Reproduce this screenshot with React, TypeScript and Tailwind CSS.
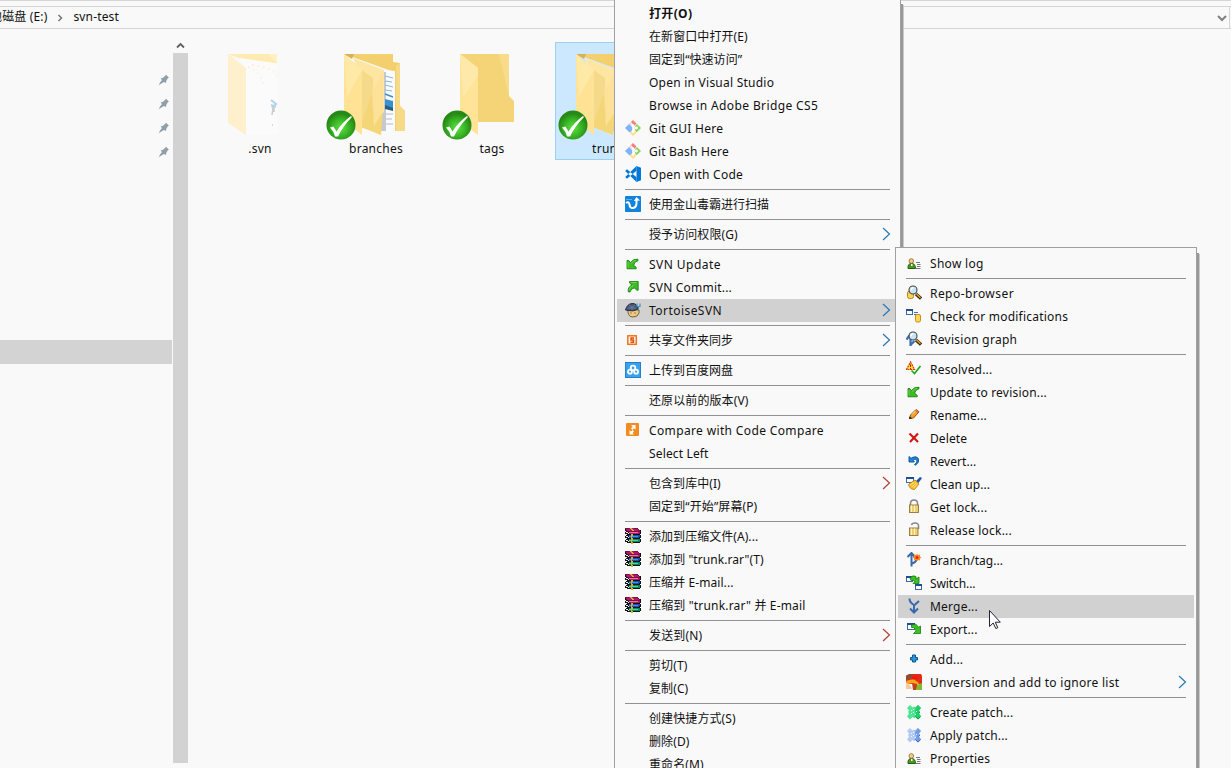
import React from "react";

type Item = { t?: string; icon?: string; arrow?: "b" | "r"; on?: boolean; bold?: boolean; track?: string };

const main: Item[] = [
  { t: "打开(O)", bold: true, track: "tracking-[0.35px]" },
  { t: "在新窗口中打开(E)", track: "tracking-[0.08px]" },
  { t: "固定到“快速访问”", track: "tracking-[0.05px]" },
  { t: "Open in Visual Studio", track: "tracking-[0.24px]" },
  { t: "Browse in Adobe Bridge CS5", track: "tracking-[0.38px]" },
  { t: "Git GUI Here", icon: "git", track: "tracking-[0.26px]" },
  { t: "Git Bash Here", icon: "git" },
  { t: "Open with Code", icon: "code", track: "tracking-[0.26px]" },
  {},
  { t: "使用金山毒霸进行扫描", icon: "duba", track: "tracking-normal" },
  {},
  { t: "授予访问权限(G)", arrow: "b", track: "tracking-[0.08px]" },
  {},
  { t: "SVN Update", icon: "update", track: "tracking-[0.45px]" },
  { t: "SVN Commit...", icon: "commit" },
  { t: "TortoiseSVN", icon: "tortoise", arrow: "b", on: true, track: "tracking-[0.45px]" },
  {},
  { t: "共享文件夹同步", icon: "share", arrow: "b", track: "tracking-normal" },
  {},
  { t: "上传到百度网盘", icon: "baidu", track: "tracking-normal" },
  {},
  { t: "还原以前的版本(V)", track: "tracking-[0.1px]" },
  {},
  { t: "Compare with Code Compare", icon: "compare", track: "tracking-[0.36px]" },
  { t: "Select Left", track: "tracking-[0.15px]" },
  {},
  { t: "包含到库中(I)", arrow: "r", track: "tracking-[0.05px]" },
  { t: "固定到“开始”屏幕(P)", track: "tracking-[0.1px]" },
  {},
  { t: "添加到压缩文件(A)...", icon: "rar", track: "tracking-[0.05px]" },
  { t: "添加到 \"trunk.rar\"(T)", icon: "rar", track: "tracking-[0.07px]" },
  { t: "压缩并 E-mail...", icon: "rar", track: "tracking-[0.08px]" },
  { t: "压缩到 \"trunk.rar\" 并 E-mail", icon: "rar", track: "tracking-[0.17px]" },
  {},
  { t: "发送到(N)", arrow: "r", track: "tracking-[0.15px]" },
  {},
  { t: "剪切(T)", track: "tracking-[0.1px]" },
  { t: "复制(C)", track: "tracking-[0.1px]" },
  {},
  { t: "创建快捷方式(S)", track: "tracking-[0.1px]" },
  { t: "删除(D)", track: "tracking-[0.1px]" },
  { t: "重命名(M)", track: "tracking-[0.1px]" },
];

const sub: Item[] = [
  { t: "Show log", icon: "log", track: "tracking-[0.3px]" },
  {},
  { t: "Repo-browser", icon: "repo", track: "tracking-[0.44px]" },
  { t: "Check for modifications", icon: "check", track: "tracking-[0.22px]" },
  { t: "Revision graph", icon: "graph", track: "tracking-[0.27px]" },
  {},
  { t: "Resolved...", icon: "resolved" },
  { t: "Update to revision...", icon: "update" },
  { t: "Rename...", icon: "rename", track: "tracking-[0.08px]" },
  { t: "Delete", icon: "delete", track: "tracking-[0.1px]" },
  { t: "Revert...", icon: "revert", track: "tracking-[0.05px]" },
  { t: "Clean up...", icon: "cleanup", track: "tracking-[0.08px]" },
  { t: "Get lock...", icon: "lock" },
  { t: "Release lock...", icon: "unlock", track: "tracking-[0.22px]" },
  {},
  { t: "Branch/tag...", icon: "branch", track: "tracking-[0.05px]" },
  { t: "Switch...", icon: "switch", track: "tracking-[-0.1px]" },
  { t: "Merge...", icon: "merge", on: true },
  { t: "Export...", icon: "export", track: "tracking-[0.1px]" },
  {},
  { t: "Add...", icon: "add" },
  { t: "Unversion and add to ignore list", icon: "ignore", arrow: "b", track: "tracking-[0.27px]" },
  {},
  { t: "Create patch...", icon: "patchG", track: "tracking-[0.13px]" },
  { t: "Apply patch...", icon: "patchB", track: "tracking-[0.13px]" },
  { t: "Properties", icon: "log" },
];

const inks: Record<string, string> = {
  K: "#141014", D: "#7a0f45", M: "#b01868", P: "#e873ae", W: "#f2f2f2",
  B: "#1454ac", L: "#3f95e6", T: "#0b8a5e", G: "#3fd79c", Y: "#d8ac2c",
};

const books = [
  "DDDDMYYMMDDDD...",
  "KMMMMMYYMMMMMD..",
  "KDMMMMMYYMMMMMDK",
  "WKKDDDDDDDDDDDDK",
  "KWWKPPPPPPPPPMMK",
  "KKKWDMMMMMMMMMDK",
  "WWKKKKYYKKKKKKK.",
  "WKKKBBYYBBBBBBBK",
  "KWWKLLYLLLLLLBBK",
  "KKKWBBYBBBBBBBKK",
  "WWKKKKYYKKKKKKK.",
  "WKKKTTYYTTTTTTTK",
  "KWWKGGYGGGGGGTTK",
  "KKKWTTYTTTTTTTTK",
  "..KKKKYYKKKKKKK.",
  "......YY........",
];

const Win = ({ x, y, w = 7, h = 6 }: { x: number; y: number; w?: number; h?: number }) => (
  <g>
    <rect x={x + 0.5} y={y + 0.5} width={w - 1} height={h - 1} fill="#fff" stroke="#3c66a5" />
    <rect x={x} y={y} width={w} height={2} fill="#1e4e96" />
  </g>
);

const Patch = ({ a, b, c }: { a: string; b: string; c: string }) => (
  <g>
    <path d="M4 1 6.500 3.500 8 2.500 9.500 3.500 12 1 15 4 13 6.500 14 8l-1 1.500 2 3-3 3-2.500-2.500L8 14l-1.500-1L4 15.500 1 12.500 3 9.500 2 8l1-1.500L1 4Z" fill={a} />
    <path d="m9.500 3.500 2.500-2.500 3 3-2 2.500 1 1.500-1 1.500 2 3-3 3-2.500-2.500L8 14l2-4-1-3Z" fill={b} />
    <path d="M5 6h1v1H5zM7 5h1v1H7zM7 8h1v1H7zM5 9h1v1H5zM9 10h1v1H9zM10 7h1v1h-1z" fill="#eafff3" />
    <path d="m14.500 12.500-2.500 2.500-2.500-2.500M12.500 9.500 14 8" fill="none" stroke={c} />
  </g>
);

const Lens = () => (
  <g>
    <path d="m10 9 5 4.500" stroke="#3c2500" strokeWidth="3.200" />
    <path d="m10.500 9 4 3.700" stroke="#e0a63c" strokeWidth="1.300" />
    <circle cx="7" cy="5" r="4" fill="#c4e5f7" stroke="#454545" strokeWidth="1.100" />
    <path d="M5 5.500q0-2.500 2.500-2.800" fill="none" stroke="#fff" strokeWidth="1.300" />
  </g>
);

const icons: Record<string, React.ReactNode> = {
  git: (
    <g>
      <path d="m8 0 3.500 3.500L9.500 6 8 6.500 4.500 3.500Z" fill="#f58080" />
      <path d="m0 8 4-4 3.500 3.500V11L4.500 12.500Z" fill="#80b3ff" />
      <path d="m16 8-4-4-2.500 3 1 4.500 1.500.5Z" fill="#8fd160" />
      <path d="m8 16-3.500-3.500L8 10l3.500 2.500Z" fill="#ffe085" />
      <path d="m5.500 2.500 2.500 3v6M8 5.500l3.500 3" stroke="#fff" fill="none" strokeWidth="1.200" />
      <circle cx="11.500" cy="8" r="1.400" fill="#fff" /><circle cx="8" cy="11.500" r="1.400" fill="#fff" /><circle cx="8" cy="5.500" r="1.300" fill="#fff" />
    </g>
  ),
  code: (
    <g fill="#0078d7">
      <path d="M11.500 0 16 1.800v12.400L11.500 16Z" />
      <path d="M11.500 0v4.800L2 12.800.2 11Zm0 16v-4.800L2 3.200.2 5Z" />
    </g>
  ),
  duba: (
    <g>
      <rect width="16" height="16" rx=".8" fill="#1283da" />
      <path d="M1 7Q4 5 4.500 8.500q.5 4 3.500 3.500 3.500-.5 3.500-5V4" fill="none" stroke="#fff" strokeWidth="2" />
      <path d="m8.800 5 2.700-4L15 4.500Z" fill="#fff" />
      <path d="M1 3.500h6" stroke="#55b4f5" />
    </g>
  ),
  update: (
    <g>
      <path d="M2 4.500h1.800l1.700 2Q8.500 2.500 13 3.200v1.600Q9.300 5.500 8.700 9.300l2.500 2v1.500H2Z" fill="#3dba24" stroke="#127a0c" strokeWidth=".8" />
      <path d="M3 6v5.500M6 7.500Q8.500 4.500 11 4" stroke="#7fe05e" strokeWidth=".8" fill="none" />
    </g>
  ),
  commit: (
    <g>
      <path d="M4.500 2.500h8.700v8.700h-1.500L9.700 9Q6 9 5 13H3.500Q2 8.500 7 6L4.500 4Z" fill="#3dba24" stroke="#127a0c" strokeWidth=".8" />
      <path d="M6 3.500h5.500M4 11q.5-3.500 4.500-4.500" stroke="#7fe05e" strokeWidth=".8" fill="none" />
    </g>
  ),
  tortoise: (
    <g>
      <path d="M3 8h11v3q-1 4-6 4-4.500 0-5-5Z" fill="#eecb85" stroke="#6b5228" strokeWidth=".9" />
      <path d="M.5 8Q2 2 7 1.500q5-.5 6 5.500Q8 10 3 8.500Z" fill="#44536f" stroke="#27324c" />
      <path d="m4 3 3 2 3-2M7 5v3M3 6h8" stroke="#7e8fb0" fill="none" strokeWidth=".7" />
      <path d="M12 1.500v3h3v-3M13.500 5v3" stroke="#3f94b5" strokeWidth="1.200" fill="none" />
      <path d="M5 11h2M9 11h2" stroke="#a97a35" />
    </g>
  ),
  share: (
    <g>
      <rect x="2.800" y="3.800" width="8.500" height="8.500" fill="#fff3e6" stroke="#ee7623" strokeWidth="1.500" />
      <path d="M9 6H6v2h2.500v2.200h-3" fill="none" stroke="#e04f08" strokeWidth="1.400" />
    </g>
  ),
  baidu: (
    <g>
      <rect width="16" height="16" fill="#3aa2ec" />
      <rect x=".5" y=".5" width="15" height="15" fill="none" stroke="#2580cb" />
      <g fill="none" stroke="#fff" strokeWidth="1.800"><circle cx="8" cy="6" r="2.300" /><circle cx="4.900" cy="9.700" r="2" /><circle cx="11.100" cy="9.700" r="2" /></g>
    </g>
  ),
  compare: (
    <g>
      <rect x="1" y="1" width="13" height="13" rx="1" fill="#f48b1e" />
      <path d="M6 3h4.500v4.500L9 6.500 7.500 8 6 6.500l1.500-2ZM4.500 8 6 9.500 7.500 8 9 9.500l-1.500 1.500L9 12.500H4.500Z" fill="#fff" />
    </g>
  ),
  rar: (
    <g shapeRendering="crispEdges">
      {books.flatMap((line, y) =>
        [...line].map((c, x) => (c === "." ? null : <rect key={`${x}-${y}`} x={x} y={y} width="1" height="1" fill={inks[c]} />))
      )}
    </g>
  ),
  log: (
    <g>
      <path d="M2 13.500Q1.500 8.500 5.500 8.500t4 5Z" fill="#459d16" stroke="#1e4d0c" strokeWidth=".9" />
      <circle cx="5.300" cy="6" r="2.300" fill="#f2cf8c" stroke="#94652a" strokeWidth=".8" />
      <path d="M5 9h1.500v2H5z" fill="#fff" />
      <path d="M10 7.500h4M11 9.500h3.500M11 11.500h3.500M10 13.500h4.500" stroke="#777" />
    </g>
  ),
  repo: <g><rect x="1.500" y="6" width="6" height="7.500" rx="2" fill="#fbd35a" stroke="#bd8413" /><Lens /></g>,
  check: (
    <g>
      <Win x={0} y={1} w={7} h={6} />
      <path d="M8 4.500h4M8 6.500h3" stroke="#3d6fb3" />
      <rect x="9.500" y="6.500" width="5" height="7.500" rx="1.500" fill="#ffd55a" stroke="#c8901a" />
    </g>
  ),
  graph: <g><path d="M4.500 15V5M.5 8.500l3-4M4.500 14l4-4" stroke="#3d6eb5" strokeWidth="2.200" fill="none" /><Lens /></g>,
  resolved: (
    <g>
      <path d="M4.500 1 8.500 8.500h-8Z" fill="#ffed16" stroke="#e22818" strokeWidth="1.200" strokeDasharray="2 .7" />
      <path d="M4.500 3.500v2.500M4.500 7v1" stroke="#a31208" />
      <path d="m5.500 9.500 3 3 6-7.500" fill="none" stroke="#1aa51b" strokeWidth="1.600" />
    </g>
  ),
  rename: (
    <g>
      <path d="m3.500 11.500 1-3.500L10 2.500l3 2.300-5.500 6.200Z" fill="#f7a321" stroke="#87440b" strokeWidth=".9" />
      <path d="m6 7.500 4-4" stroke="#ffe398" /><path d="m10.500 3 2.200 1.700-1.200 1.300-2-2Z" fill="#d8695a" /><path d="m3 12 .7-2.500L6 11.300Z" fill="#111" />
    </g>
  ),
  delete: <path d="m3.500 3.500 8.500 8.500M12 3.500 4 12" stroke="#d01512" strokeWidth="2.100" />,
  revert: <path d="M3 3.500V9h5.500L7 7.300q3.800-2.300 4 .7 0 2-2.500 3.500l1 .8Q13.500 9.500 12.500 6 10.500 2 5 5.300Z" fill="#2287d8" stroke="#074f9a" strokeWidth=".9" />,
  cleanup: (
    <g>
      <Win x={0} y={1} w={8} h={6} />
      <path d="m10 5 4-4 2 1-3.500 5Z" fill="#1c58a2" />
      <path d="m3.500 7.500 5.500-3.500 4 4-4.500 5.500q-4.500 0-6-4.500Z" fill="#f9bd2e" stroke="#b97a10" strokeWidth=".8" />
      <path d="m4 9 4.500-3M6 11l4-4M8 12l3-4" stroke="#ffe98a" strokeWidth=".8" />
    </g>
  ),
  lock: (
    <g>
      <path d="M4.500 6V4.500Q4.500 1 8 1t3.500 3.500V6" fill="none" stroke="#858585" strokeWidth="1.500" />
      <rect x="3.500" y="6" width="9" height="7.500" fill="#ebcf77" stroke="#97733a" strokeWidth=".9" />
      <path d="M5.500 6.500v6.500M8.500 6.500v6.500" stroke="#fff3be" />
    </g>
  ),
  unlock: (
    <g>
      <path d="M5.500 3Q6 .8 9.500 1 13 1.500 12.500 4.500V7" fill="none" stroke="#858585" strokeWidth="1.500" />
      <rect x="3.500" y="6" width="8.500" height="7.500" fill="#ebcf77" stroke="#97733a" strokeWidth=".9" />
      <path d="M5.500 6.500v6.500M8.500 6.500v6.500" stroke="#fff3be" />
    </g>
  ),
  branch: (
    <g>
      <path d="M5.500 14.500V2M1.500 5l4-4 3.500 4" stroke="#3968ad" strokeWidth="2" fill="none" />
      <path d="M6 11.500q4-1 5-4.500" stroke="#3968ad" strokeWidth="2" fill="none" />
      <path d="m11 1.500 1 1.500 2-.5v2l1.500 1-1.500 1v2l-2-.5-1 1-1-1-2 .5v-2L6.500 5.500 8 4.500v-2l2 .5Z" fill="#f78a2a" />
      <circle cx="11" cy="5.500" r="1.500" fill="#e52719" />
    </g>
  ),
  switch: (
    <g>
      <Win x={0} y={1} w={7} h={6} />
      <path d="M4 3Q7-.5 10 1.500V4l3-2v6.500H7L9 6.500Q7 4.500 5 5.500Z" fill="#3cc022" stroke="#147d0c" strokeWidth=".8" />
      <Win x={9} y={9} w={7} h={6} />
    </g>
  ),
  merge: (
    <g fill="none" stroke="#3968ad" strokeWidth="2">
      <path d="M3.500.5q0 4 4.500 6.500v7M13 3 8 7.500M4 10.500l4 4 4-4" />
    </g>
  ),
  export: (
    <g>
      <Win x={1} y={2} w={8} h={7} />
      <path d="M5.500 4q5.500-2.500 6.500 2.500l2.500-1.500V12.500H7.500L10 10Q9.500 6 5.500 6.500Z" fill="#3cc022" stroke="#147d0c" strokeWidth=".8" />
    </g>
  ),
  add: <path d="M6.500 4h3v2.500h2v2.500h-2v2h-3v-2h-2V6.500h2Z" fill="#2d97dc" stroke="#0d5593" />,
  ignore: (
    <g>
      <path d="M3 0h12l1 2v8H2L0 8V2Z" fill="#e32b17" />
      <path d="M1 1 7 0 6 3 2 6 0 6V2Z" fill="#84503a" />
      <path d="M6 3q4-2 6 0l-1 2H6Z" fill="#ee1a10" />
      <path d="M0 7q4-2 8-1.500L13 9l-3 4-3-4-5 1Z" fill="#fba51b" />
      <path d="M6 9l5 1 1 2-2 4H7Z" fill="#c3401b" /><path d="m10 16 1-5 5-2v7Z" fill="#82b92f" />
      <path d="M0 9q4 0 6 6H0Z" fill="#f6c9a0" />
    </g>
  ),
  patchG: <Patch a="#4ce692" b="#22cc68" c="#12984a" />,
  patchB: <Patch a="#b3cbf0" b="#749fe6" c="#3f6dc8" />,
};

const Icon = ({ name }: { name: string }) => (
  <svg className="block h-4 w-4 shrink-0" viewBox="0 0 16 16">{icons[name]}</svg>
);

const Arrow = ({ kind }: { kind: "b" | "r" }) => (
  <svg className="-mr-px mb-px h-3.5 w-[9px] shrink-0" viewBox="0 0 9 14" fill="none">
    <path d="m1 1 6.500 6L1 13" stroke={kind === "b" ? "#2878b4" : "#b0433c"} strokeWidth="1.200" />
  </svg>
);

const Row = ({ it }: { it: Item }) => {
  if (!it.t)
    return (
      <div className="flex h-[7px] shrink-0 items-center px-2">
        <div className="h-px w-full bg-[#919191]" />
      </div>
    );
  return (
    <div className={`flex h-[23px] shrink-0 items-center px-2 ${it.on ? "bg-[#d1d1d1]" : ""}`}>
      <div className="mr-2 mb-px h-4 w-4 shrink-0">{it.icon && <Icon name={it.icon} />}</div>
      <span className={`grow text-[12px] leading-[23px] whitespace-pre ${it.bold ? "font-bold" : ""} ${it.track ?? "tracking-[0.2px]"}`}>
        {it.t}
      </span>
      {it.arrow && <Arrow kind={it.arrow} />}
    </div>
  );
};

const Check = () => (
  <svg className="absolute top-[67px] left-0.5 h-[30px] w-[30px]" viewBox="0 0 30 30">
    <defs>
      <radialGradient id="orb" cx=".5" cy=".6" r=".5"><stop offset="0" stopColor="#5fe045" /><stop offset=".6" stopColor="#37b424" /><stop offset="1" stopColor="#268815" /></radialGradient>
    </defs>
    <circle cx="15" cy="15" r="14.500" fill="url(#orb)" />
    <path d="m4 17.500 3.500-1 3 5Q17 11.500 25 6l1 1Q17 16 12 26.500H9Q8 21.500 4 17.500Z" fill="#fff" />
  </svg>
);

const Folder = ({ kind }: { kind: "svn" | "open" | "tags" | "cut" }) => (
  <svg className="h-[82px] w-[62px]" viewBox="0 0 62 82">
    {kind === "svn" && (
      <g>
        <path d="M0 0h49v9.500L12 4.500Z" fill="#ffeab2" />
        <path d="M40 0h9v9Z" fill="#fff0c6" />
        <path d="m12 4 37 5.500v71H18V15Z" fill="#fbfbfb" />
        <path d="M0 0 18 14v67L0 69Z" fill="#fff0cd" />
        <path d="M20 13q12 4 16 19M24 11q20 2 25 11" fill="none" stroke="#ffe6a6" strokeDasharray="1.500 4" />
        <path d="m43 46 5 4-4 4 4-2M43 51l3 1" stroke="#b5d3e8" strokeWidth="2" fill="none" />
        <path d="m45 54-1 7M46 54v4M44 71h1" stroke="#ccc" strokeWidth="1.500" />
      </g>
    )}
    {kind === "tags" && (
      <g>
        <path d="M0 0h49v42l5 5v21H0Z" fill="#f5d477" />
        <path d="M39 0h10v42Z" fill="#f8dc8a" />
        <path d="M0 0 18 14v67L0 68Z" fill="#ffe396" />
        <path d="m0 0 18 14v8L3 43Z" fill="#ffe9aa" />
      </g>
    )}
    {(kind === "open" || kind === "cut") && (
      <g>
        <path d="M0 0h49v8l7 1v43l5 5v20H50V18Z" fill="#f3d06d" />
        <path d="M56 9v43l5 5v20h-9V12Z" fill="#f7da86" />
        <path d="M0 0h10l-2 5Z" fill="#d9b254" />
        <path d="m9 4 31 12 11 1v60H37Z" fill="#f7faff" />
        <path d="M40 18h2v59h-5V58h3Z" fill="#c8c8cc" />
        <path d="m41 22 8 2M41 27l7 1M41 31l8 2M41 36l7 1" stroke="#8cb8dc" />
        <path d="m41 40 8 3" stroke="#3a92d2" strokeWidth="1.500" />
        <path d="m41 45 8 2v9l-8-3Z" fill="#3b91cf" /><path d="m41 51 8 3v3l-8-2Z" fill="#285f79" />
        <path d="M42 60h7M42 65h6M42 70h7" stroke="#bbb" />
        <path d="m9 4 31 12v42l-3 3v20l-20-8V22Z" fill="#fee6a2" />
        <path d="M18 16 29 24v20L17 78Z" fill="#f4da8a" />
        <path d="m28 38 11 16-2 27-20-8Z" fill="#f4d677" />
        <path d="M28 38 39 18v40l-9 14Z" fill="#fde198" />
        <path d="M0 0 18 16v65L0 67Z" fill="#ffe294" />
        <path d="m0 0 18 16L3 43Z" fill="#ffe9a7" />
      </g>
    )}
  </svg>
);

const File = ({ name, kind, sel }: { name: string; kind: "svn" | "open" | "tags" | "cut"; sel?: boolean }) => (
  <div className={`relative h-[118px] w-[116px] shrink-0 border ${sel ? "border-[#99d1f5] bg-[#cce8ff]" : "border-transparent"}`}>
    <div className="pt-[11px] pl-5"><Folder kind={kind} /></div>
    {kind !== "svn" && <Check />}
    <div className="mt-[5px] pr-2.5 text-center text-[12px] leading-4 tracking-[0.25px]">{name}</div>
  </div>
);

const Pin = () => (
  <svg className="h-3 w-3" viewBox="0 0 12 12">
    <path d="M8 .8 11 3.800l-1.200.5-.5 1L8.500 6l-.5 3L6 8 3 9.800.8 11.300 2 8.500 4 6 2.500 4.500 5 3.800 6.500 2.500Z" fill="#8fa0aa" />
  </svg>
);

export default function App() {
  return (
    <div className="relative flex h-[768px] w-[1231px] flex-col overflow-hidden bg-[#f9f9f9] font-['Noto_Sans','Noto_Sans_CJK_SC',sans-serif] text-[12px] text-[#111]">
      <div className="h-1.5 shrink-0 border-t border-[#d5d5d5]" />
      <header className="flex h-[23px] shrink-0 items-center border-y border-[#d5d5d5] pr-px">
        <span className="-ml-[10px] pb-px whitespace-pre tracking-[0.15px]">地磁盘 (E:)</span>
        <svg className="ml-[9px] h-2 w-2" viewBox="0 0 8 8" fill="none"><path d="m2.500 1 3 3-3 3" stroke="#777" strokeWidth="1.500" /></svg>
        <span className="ml-[9px] pb-px tracking-[0.15px]">svn-test</span>
        <div className="flex h-full grow items-center justify-end border-r border-[#d5d5d5]">
          <svg className="mr-0.5 h-2 w-2.5" viewBox="0 0 10 8" fill="none"><path d="m1 2 4 4 4-4" stroke="#808080" strokeWidth="2" /></svg>
        </div>
      </header>
      <main className="flex grow">
        <aside className="flex w-[173px] flex-col">
          <div className="flex flex-col items-end gap-3 pt-[45px] pr-[3px]">
            <Pin /><Pin /><Pin /><Pin />
          </div>
          <div className="mt-[182px] h-6 w-[172px] bg-[#d3d3d3]" />
        </aside>
        <div className="flex w-[15px] flex-col items-center">
          <svg className="mt-[13px] h-2 w-[9px]" viewBox="0 0 9 8" fill="none"><path d="m1 5.500 3.500-3.500L8 5.500" stroke="#606060" strokeWidth="1.800" /></svg>
          <div className="mt-[3px] h-[710px] w-[15px] bg-[#d2d2d2]" />
        </div>
        <section className="flex pt-[13px] pl-[19px]">
          <File name=".svn" kind="svn" />
          <File name="branches" kind="open" />
          <File name="tags" kind="tags" />
          <File name="trunk" kind="cut" sel />
        </section>
      </main>

      <div className="absolute top-0 left-[614px] flex h-[780px] w-[287px] flex-col border-x border-[#a0a0a0] bg-[#f9f9f9] px-0.5 pt-0.5 shadow-[2px_4px_0_#999,3px_5px_0_#c9c9c9]">
        {main.map((it, i) => <Row key={i} it={it} />)}
      </div>

      <div className="absolute top-[247px] left-[895px] flex h-[540px] w-[302px] flex-col border border-[#a0a0a0] bg-[#f9f9f9] px-0.5 pt-1 shadow-[2px_6px_0_#999,3px_7px_0_#c9c9c9]">
        {sub.map((it, i) => <Row key={i} it={it} />)}
      </div>

      <svg className="absolute top-[609px] left-[988px] h-[21px] w-[14px]" viewBox="0 0 14 21">
        <path d="M1.500 1.500v16l3.700-3.500 2.600 5.500 2-.8-2.500-5.500h5Z" fill="#fff" stroke="#223" />
      </svg>
    </div>
  );
}
